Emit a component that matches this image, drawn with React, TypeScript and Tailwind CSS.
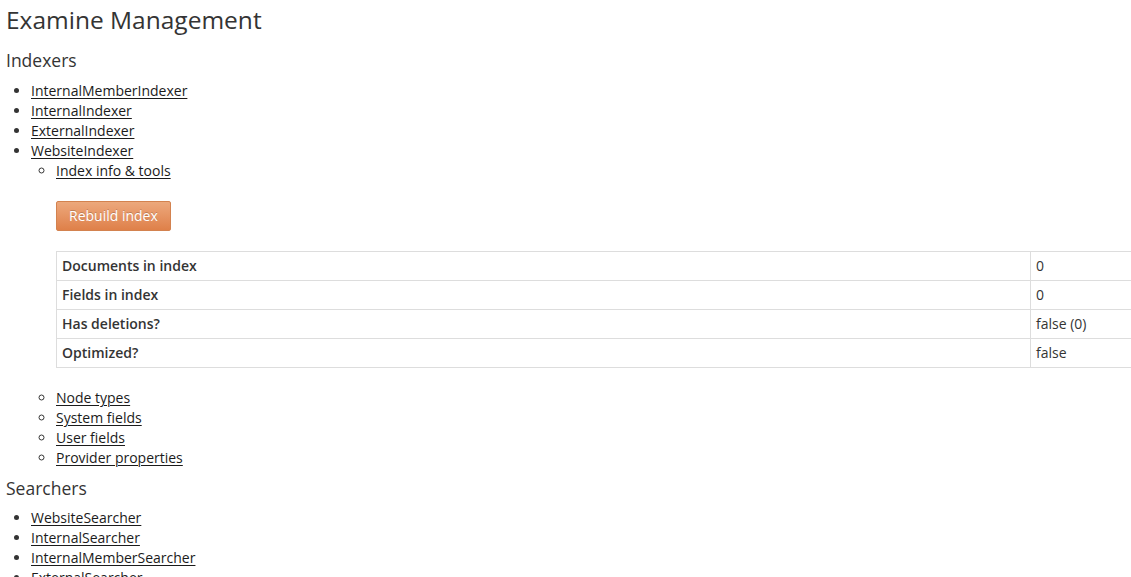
import React from 'react';

const indexers = ['InternalMemberIndexer', 'InternalIndexer', 'ExternalIndexer'];
const searchers = ['WebsiteSearcher', 'InternalSearcher', 'InternalMemberSearcher', 'ExternalSearcher'];
const subLinks = ['Node types', 'System fields', 'User fields', 'Provider properties'];

const stats: [string, string][] = [
  ['Documents in index', '0'],
  ['Fields in index', '0'],
  ['Has deletions?', 'false (0)'],
  ['Optimized?', 'false'],
];

function Link({ children }: { children: React.ReactNode }) {
  return (
    <a href="#" className="text-[#1b1b1b] underline underline-offset-2 decoration-1">
      {children}
    </a>
  );
}

export default function App() {
  return (
    <div
      className="h-[577px] w-[1131px] overflow-hidden bg-white px-[6px] text-[14px] leading-[20px] text-[#343434]"
      style={{ fontFamily: '"Open Sans", "Liberation Sans", sans-serif' }}
    >
      <h1 className="text-[24.5px] leading-[40px] font-normal text-[#343434]">Examine Management</h1>

      <h2 className="text-[17.5px] leading-[41px] font-normal">Indexers</h2>
      <ul className="list-disc pl-[25px]">
        {indexers.map((name) => (
          <li key={name}>
            <Link>{name}</Link>
          </li>
        ))}
        <li>
          <Link>WebsiteIndexer</Link>
          <ul className="list-[circle] pl-[25px]">
            <li>
              <Link>Index info &amp; tools</Link>
              <div className="mt-[20px] mb-[20px]">
                <button className="h-[30px] rounded-[2px] border border-[#d3824f] bg-gradient-to-b from-[#eca87c] to-[#df8049] px-[12px] text-[14px] text-white [text-shadow:0_-1px_0_rgba(0,0,0,0.2)]">
                  Rebuild index
                </button>
              </div>
              <table className="mb-[20px] w-[1100px] border-collapse">
                <tbody>
                  {stats.map(([label, value]) => (
                    <tr key={label}>
                      <td className="w-[974px] border border-[#dddddd] px-[5px] py-[4px] font-semibold">
                        {label}
                      </td>
                      <td className="border border-[#dddddd] px-[5px] py-[4px]">{value}</td>
                    </tr>
                  ))}
                </tbody>
              </table>
            </li>
            {subLinks.map((name) => (
              <li key={name}>
                <Link>{name}</Link>
              </li>
            ))}
          </ul>
        </li>
      </ul>

      <h2 className="text-[17.5px] leading-[40px] font-normal">Searchers</h2>
      <ul className="list-disc pl-[25px]">
        {searchers.map((name) => (
          <li key={name}>
            <Link>{name}</Link>
          </li>
        ))}
      </ul>
    </div>
  );
}
